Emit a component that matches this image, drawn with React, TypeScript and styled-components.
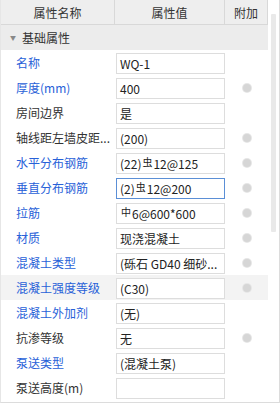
import React from 'react';
import styled, { createGlobalStyle } from 'styled-components';

interface Prop {
  name: string;
  value: string;
  blue?: boolean;
  dot?: boolean;
  focused?: boolean;
  hover?: boolean;
}

const props: Prop[] = [
  { name: '名称', value: 'WQ-1', blue: true },
  { name: '厚度(mm)', value: '400', blue: true, dot: true },
  { name: '房间边界', value: '是' },
  { name: '轴线距左墙皮距...', value: '(200)', dot: true },
  { name: '水平分布钢筋', value: '(22)虫12@125', blue: true, dot: true },
  { name: '垂直分布钢筋', value: '(2)虫12@200', blue: true, dot: true, focused: true },
  { name: '拉筋', value: '中6@600*600', blue: true, dot: true },
  { name: '材质', value: '现浇混凝土', blue: true, dot: true },
  { name: '混凝土类型', value: '(砾石 GD40 细砂...', blue: true, dot: true },
  { name: '混凝土强度等级', value: '(C30)', blue: true, dot: true, hover: true },
  { name: '混凝土外加剂', value: '(无)', blue: true },
  { name: '抗渗等级', value: '无', dot: true },
  { name: '泵送类型', value: '(混凝土泵)', blue: true },
  { name: '泵送高度(m)', value: '' },
];

const GlobalStyle = createGlobalStyle`
  html, body { margin: 0; padding: 0; background: #fff; }
  body {
    font-family: "Noto Sans CJK SC", "Liberation Sans", sans-serif;
    font-size: 12px;
    color: #222;
  }
`;

const Panel = styled.div`
  width: 280px;
  height: 403px;
  box-sizing: border-box;
  border-right: 1px solid #dcdcdc;
  border-bottom: 1px solid #dcdcdc;
  border-left: 1px solid #e6e6e6;
  display: flex;
  overflow: hidden;
`;

const Table = styled.div`
  width: 267px;
  display: flex;
  flex-direction: column;
`;

const Cols = '114px 110px 43px';

const HeaderRow = styled.div`
  display: grid;
  grid-template-columns: ${Cols};
  height: 25px;
  background: #eeeeee;
  border-bottom: 1px solid #d8d8d8;
  box-sizing: border-box;
`;

const HeaderCell = styled.div`
  display: flex;
  align-items: center;
  justify-content: center;
  border-right: 1px solid #d8d8d8;
  font-size: 12px;
  color: #333;
`;

const GroupRow = styled.div`
  height: 25px;
  background: #ececec;
  display: flex;
  align-items: center;
  padding-left: 9px;
  gap: 6px;
  color: #333;
`;

const Caret = styled.span`
  font-size: 6px;
  color: #888;
`;

const Row = styled.div<{ $hover?: boolean }>`
  display: grid;
  grid-template-columns: ${Cols};
  height: 25px;
  align-items: center;
  background: ${p => p.$hover ? '#f3f3f3' : '#fff'};
`;

const NameCell = styled.div<{ $blue?: boolean }>`
  padding-left: 15px;
  color: ${p => p.$blue ? '#2861d8' : '#333'};
  white-space: nowrap;
  overflow: hidden;
`;

const ValueBox = styled.div<{ $focused?: boolean }>`
  margin: 1px 0 0 1px;
  height: 21px;
  box-sizing: border-box;
  border: 1px solid ${p => p.$focused ? '#5b8fd6' : '#dddddd'};
  background: #fff;
  padding: 0 3px;
  display: flex;
  align-items: center;
  color: #222;
  white-space: pre;
  overflow: hidden;
`;

const Sym = styled.span`
  font-size: 10px;
  margin: 0 1px;
  position: relative;
  top: -2px;
`;

const DotCell = styled.div`
  display: flex;
  justify-content: center;
  align-items: center;
`;

const Dot = styled.span`
  width: 8px;
  height: 8px;
  border-radius: 50%;
  background: #d6d6d6;
  box-shadow: 0 0 0 1px #e6e6e6;
`;

const ScrollTrack = styled.div`
  flex: 1;
  display: flex;
  justify-content: center;
  padding-top: 14px;
`;

const Thumb = styled.div`
  width: 5px;
  height: 218px;
  background: #e9e9e9;
  border-radius: 1px;
`;

const renderValue = (v: string) =>
  v.split(/([虫中](?=\d))/).map((part, i) =>
    part === '虫' || part === '中' ? <Sym key={i}>{part}</Sym> : part
  );

const App: React.FC = () => (
  <>
    <GlobalStyle />
    <Panel>
      <Table>
        <HeaderRow>
          <HeaderCell>属性名称</HeaderCell>
          <HeaderCell>属性值</HeaderCell>
          <HeaderCell>附加</HeaderCell>
        </HeaderRow>
        <GroupRow>
          <Caret>▼</Caret>
          <span>基础属性</span>
        </GroupRow>
        {props.map(p => (
          <Row key={p.name} $hover={p.hover}>
            <NameCell $blue={p.blue}>{p.name}</NameCell>
            <ValueBox $focused={p.focused}>{renderValue(p.value)}</ValueBox>
            <DotCell>{p.dot && <Dot />}</DotCell>
          </Row>
        ))}
      </Table>
      <ScrollTrack>
        <Thumb />
      </ScrollTrack>
    </Panel>
  </>
);

export default App;
